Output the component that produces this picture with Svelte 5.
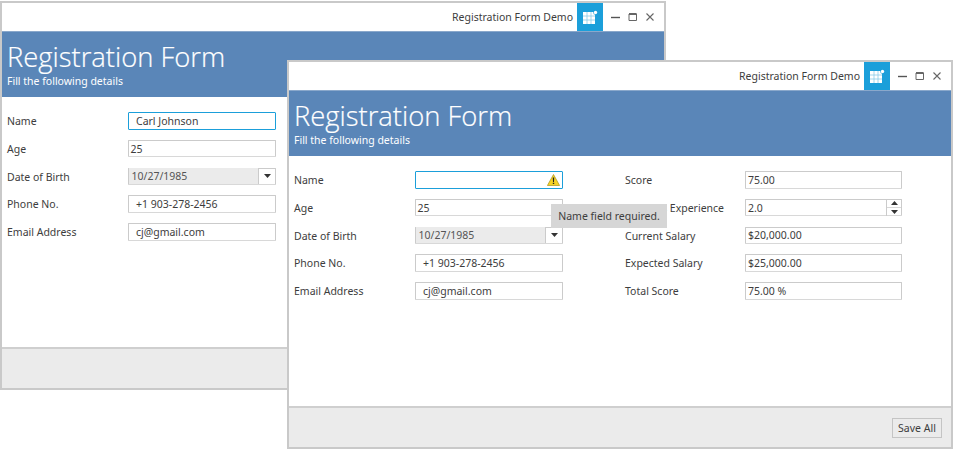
<script>
  const leftFields = [
    { label: 'Name', value: 'Carl Johnson', indent: true },
    { label: 'Age', value: '25' },
    { label: 'Date of Birth', value: '10/27/1985', kind: 'date' },
    { label: 'Phone No.', value: '+1 903-278-2456', indent: true },
    { label: 'Email Address', value: 'cj@gmail.com', indent: true }
  ];

  const rightFields = [
    { label: 'Score', value: '75.00' },
    { label: 'Previous Experience', value: '2.0', kind: 'spin' },
    { label: 'Current Salary', value: '$20,000.00' },
    { label: 'Expected Salary', value: '$25,000.00' },
    { label: 'Total Score', value: '75.00 %' }
  ];

  const frontLeft = leftFields.map((f, i) => (i === 0 ? { ...f, value: '', invalid: true } : f));
</script>

{#snippet field(f, focused)}
  <div class="row">
    <span class="label">{f.label}</span>
    <div class="input" class:focused class:indent={f.indent} class:date={f.kind === 'date'}>
      <span class="value">{f.value}</span>
      {#if f.kind === 'date'}
        <span class="drop">
          <svg width="7" height="4" viewBox="0 0 7 4"><path d="M0 0h7L3.5 4z" fill="#333" /></svg>
        </span>
      {/if}
      {#if f.kind === 'spin'}
        <span class="spin">
          <span class="arrow up"><svg width="7" height="4" viewBox="0 0 7 4"><path d="M0 4h7L3.5 0z" fill="#333" /></svg></span>
          <span class="arrow"><svg width="7" height="4" viewBox="0 0 7 4"><path d="M0 0h7L3.5 4z" fill="#333" /></svg></span>
        </span>
      {/if}
      {#if f.invalid}
        <svg class="warn" width="13" height="12" viewBox="0 0 13 12">
          <path d="M6.5 .5L12.6 11.5H.4z" fill="#f5d327" stroke="#a8921c" stroke-width=".7" />
          <path d="M5.8 3.6h1.4l-.2 4.4h-1zM5.8 8.8h1.4v1.3H5.8z" fill="#222" />
        </svg>
      {/if}
    </div>
  </div>
{/snippet}

{#snippet titlebar()}
  <div class="titlebar">
    <span class="app-title">Registration Form Demo</span>
    <span class="app-icon">
      <svg width="16" height="15" viewBox="0 0 16 15">
        <path d="M1 2h12v12H1z" fill="#fff" />
        <path d="M5 2v12M9 2v12M1 6h12M1 10h12" stroke="#8ccbe9" stroke-width=".8" />
        <circle cx="13.5" cy="2.5" r="2.3" fill="#1b9fda" />
        <circle cx="13.5" cy="2.5" r="1.7" fill="#fff" />
      </svg>
    </span>
    <span class="controls">
      <svg width="10" height="10" viewBox="0 0 10 10"><path d="M0 5.5h9" stroke="#555" stroke-width="1.4" /></svg>
      <svg width="10" height="10" viewBox="0 0 10 10"><path d="M1 2h7.5v6.5H1z" fill="none" stroke="#666" stroke-width="1" /><path d="M1 2h7.5" stroke="#666" stroke-width="2" /></svg>
      <svg width="10" height="10" viewBox="0 0 10 10"><path d="M1.5 1.5l7 7M8.5 1.5l-7 7" stroke="#666" stroke-width="1.1" /></svg>
    </span>
  </div>
{/snippet}

{#snippet banner()}
  <header class="banner">
    <h1>Registration Form</h1>
    <p>Fill the following details</p>
  </header>
{/snippet}

<div class="desktop">
  <section class="window back">
    {@render titlebar()}
    {@render banner()}
    <div class="form">
      <div class="col">
        {#each leftFields as f, i}
          {@render field(f, i === 0)}
        {/each}
      </div>
    </div>
    <footer class="footer"></footer>
  </section>

  <section class="window front">
    {@render titlebar()}
    {@render banner()}
    <div class="form">
      <div class="col">
        {#each frontLeft as f, i}
          {@render field(f, i === 0)}
        {/each}
      </div>
      <div class="col wide">
        {#each rightFields as f}
          {@render field(f, false)}
        {/each}
      </div>
    </div>
    <footer class="footer">
      <button class="save">Save All</button>
    </footer>
    <div class="tooltip">Name field required.</div>
  </section>
</div>

<style>
  :global(body) {
    background: #fff;
  }

  .desktop {
    position: relative;
    width: 954px;
    height: 450px;
    overflow: hidden;
    font-family: "Noto Sans", "Open Sans", sans-serif;
    font-size: 10.5px;
    color: #3d3d3d;
  }

  .window {
    position: absolute;
    width: 666px;
    height: 389px;
    box-sizing: border-box;
    display: flex;
    flex-direction: column;
    background: #fff;
    border: 2px solid #c9c9c9;
  }

  .back {
    left: 0;
    top: 1px;
  }

  .front {
    left: 287px;
    top: 60px;
  }

  .titlebar {
    height: 28px;
    display: flex;
    align-items: center;
    justify-content: flex-end;
  }

  .app-title {
    margin-right: 4px;
  }

  .app-icon {
    width: 26px;
    height: 28px;
    display: flex;
    align-items: center;
    justify-content: center;
    background: #1b9fda;
  }

  .controls {
    display: flex;
    gap: 7px;
    width: 61px;
    padding-left: 8px;
    box-sizing: border-box;
  }

  .banner {
    height: 66px;
    box-sizing: border-box;
    padding: 8px 5px 0;
    background: #5a86b8;
    color: #fff;
    border-top: 1px solid #8aa8cb;
  }

  h1 {
    margin: 0;
    font-family: "Open Sans", sans-serif;
    font-size: 27.4px;
    font-weight: 300;
    line-height: 33px;
    -webkit-text-stroke: 0.2px #fff;
  }

  .banner p {
    margin: 0;
    font-size: 10.5px;
    line-height: 16px;
  }

  .form {
    flex: 1;
    display: flex;
    gap: 62px;
    padding: 15px 5px 0;
  }

  .col {
    width: 269px;
  }

  .wide {
    width: 277px;
  }

  .row {
    height: 27.75px;
    display: flex;
    align-items: flex-start;
  }

  .label {
    width: 120.5px;
    flex: none;
    line-height: 18px;
    white-space: nowrap;
  }

  .wide .label {
    width: 120px;
  }

  .input {
    position: relative;
    flex: 1;
    height: 17.5px;
    box-sizing: border-box;
    display: flex;
    align-items: center;
    justify-content: space-between;
    padding-left: 2px;
    border: 1px solid #cbcbcb;
    border-bottom-color: #d8d8d8;
    border-radius: 1px;
    background: #fff;
  }

  .focused {
    border-color: #1b9fda;
  }

  .indent {
    padding-left: 7.5px;
  }

  .date {
    padding-left: 0;
  }

  .date .value {
    flex: 1;
    height: 16px;
    line-height: 16px;
    padding-left: 3px;
    background: #ebebeb;
    color: #555;
  }

  .drop {
    width: 17px;
    height: 16px;
    box-sizing: border-box;
    display: flex;
    align-items: center;
    justify-content: center;
    border-left: 1px solid #cbcbcb;
  }

  .spin {
    width: 15px;
    height: 16px;
    box-sizing: border-box;
    display: flex;
    flex-direction: column;
    border-left: 1px solid #cbcbcb;
  }

  .arrow {
    flex: 1;
    display: flex;
    align-items: center;
    justify-content: center;
  }

  .up {
    border-bottom: 1px solid #d8d8d8;
  }

  .warn {
    position: absolute;
    right: 2px;
    top: 2px;
  }

  .footer {
    height: 41px;
    box-sizing: border-box;
    display: flex;
    align-items: center;
    justify-content: flex-end;
    padding-right: 9px;
    background: #ebebeb;
    border-top: 2px solid #cfcfcf;
  }

  .save {
    width: 50px;
    height: 20px;
    padding: 0;
    font: inherit;
    color: #3d3d3d;
    background: #ebebeb;
    border: 1px solid #c4c4c4;
  }

  .tooltip {
    position: absolute;
    left: 262px;
    top: 142px;
    width: 116px;
    height: 24px;
    line-height: 24px;
    text-align: center;
    background: #d6d6d6;
  }
</style>
